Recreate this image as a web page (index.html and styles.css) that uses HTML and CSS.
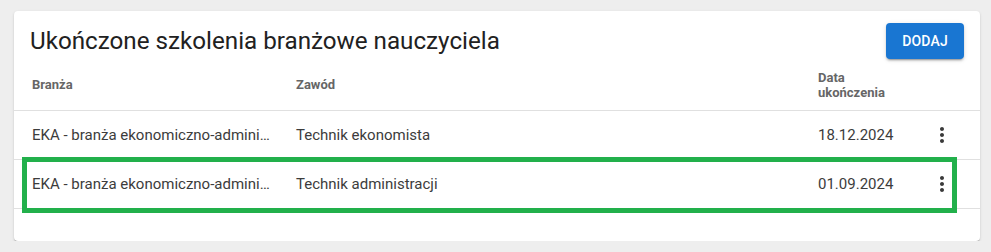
FILE: index.html
```html
<!DOCTYPE html>
<html>
<head>
	<meta charset="utf-8">
	<title>Szkolenia branżowe</title>
	<link rel="stylesheet" href="styles.css">
</head>
<body>
	<div class="card">
		<div class="cardHead">
			<h2 class="title">Ukończone szkolenia branżowe nauczyciela</h2>
			<button class="btnAdd" type="button">Dodaj</button>
		</div>

		<div class="grid">
			<div class="row headRow">
				<div class="cell c1">Branża</div>
				<div class="cell c2">Zawód</div>
				<div class="cell c3">Data ukończenia</div>
				<div class="cell c4"></div>
			</div>

			<div class="row">
				<div class="cell c1"><span class="cut">EKA - branża ekonomiczno-administracyjna</span></div>
				<div class="cell c2">Technik ekonomista</div>
				<div class="cell c3">18.12.2024</div>
				<div class="cell c4">
					<svg class="kebab" viewBox="0 0 24 24"><path d="M12 8c1.1 0 2-.9 2-2s-.9-2-2-2-2 .9-2 2 .9 2 2 2zm0 2c-1.1 0-2 .9-2 2s.9 2 2 2 2-.9 2-2-.9-2-2-2zm0 6c-1.1 0-2 .9-2 2s.9 2 2 2 2-.9 2-2-.9-2-2-2z"/></svg>
				</div>
			</div>

			<div class="row marked">
				<div class="cell c1"><span class="cut">EKA - branża ekonomiczno-administracyjna</span></div>
				<div class="cell c2">Technik administracji</div>
				<div class="cell c3">01.09.2024</div>
				<div class="cell c4">
					<svg class="kebab" viewBox="0 0 24 24"><path d="M12 8c1.1 0 2-.9 2-2s-.9-2-2-2-2 .9-2 2 .9 2 2 2zm0 2c-1.1 0-2 .9-2 2s.9 2 2 2 2-.9 2-2-.9-2-2-2zm0 6c-1.1 0-2 .9-2 2s.9 2 2 2 2-.9 2-2-.9-2-2-2z"/></svg>
				</div>
			</div>
		</div>
	</div>
</body>
</html>
```

FILE: styles.css
```css
body{
	margin: 0;
	padding: 11px 11px 0 14px;
	background: #eeeeee;
	font-family: Roboto, "Liberation Sans", sans-serif;
}

.card{
	width: 966px;
	background: #fff;
	border-radius: 4px;
	box-shadow: 0 2px 1px -1px rgba(0,0,0,0.2), 0 1px 1px 0 rgba(0,0,0,0.14), 0 1px 3px 0 rgba(0,0,0,0.12);
	padding-bottom: 32px;
}

.cardHead{
	display: flex;
	align-items: center;
	justify-content: space-between;
	padding: 12px 16px 0 16px;
	height: 36px;
}
.title{
	margin: 0;
	font-size: 24.2px;
	font-weight: 400;
	color: #212121;
}
.btnAdd{
	height: 36px;
	padding: 0 16px;
	border: none;
	border-radius: 4px;
	background: #1976d2;
	color: #fff;
	font-family: inherit;
	font-size: 14px;
	font-weight: 500;
	letter-spacing: 0.2px;
	text-transform: uppercase;
	box-shadow: 0 3px 1px -2px rgba(0,0,0,0.2), 0 2px 2px 0 rgba(0,0,0,0.14), 0 1px 5px 0 rgba(0,0,0,0.12);
}

.row{
	display: grid;
	grid-template-columns: 266px 522px 114px 64px;
	align-items: center;
	height: 49px;
	border-bottom: 1px solid #e0e0e0;
	box-sizing: border-box;
	font-size: 15px;
	color: #3c3c3c;
}
.headRow{
	height: 52px;
	font-size: 13px;
	font-weight: 700;
	line-height: 15px;
	color: #666;
}
.cell{
	padding: 0 16px;
	min-width: 0;
}
.c1{
	padding: 0 8px 0 18px;
}
.cut{
	display: block;
	white-space: nowrap;
	overflow: hidden;
	text-overflow: ellipsis;
}
.c4{
	padding: 0 0 0 14px;
	display: flex;
}
.kebab{
	width: 24px;
	height: 24px;
	fill: #3a3a3a;
}

/* zaznaczenie wiersza */
.marked{
	position: relative;
}
.marked::after{
	content: "";
	position: absolute;
	left: 8px;
	top: -3px;
	width: 935px;
	height: 56px;
	border: 5px solid #22b04b;
	box-sizing: border-box;
}
```
